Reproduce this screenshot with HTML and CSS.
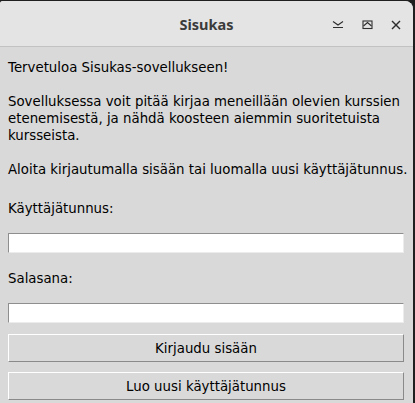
FILE: index.html
```html
<!DOCTYPE html>
<html lang="fi">
<head>
<meta charset="utf-8">
<title>Sisukas</title>
<link rel="stylesheet" href="styles.css">
</head>
<body>
<div class="window">
  <div class="titlebar">
    <span class="title">Sisukas</span>
    <div class="controls">
      <svg class="ctl ctl-min" width="12" height="10" viewBox="0 0 12 10">
        <polyline points="1,1.5 6,5 11,1.5" fill="none" stroke="#2e2e2e" stroke-width="1.1"/>
        <line x1="1" y1="7.5" x2="11" y2="7.5" stroke="#2e2e2e" stroke-width="1.1"/>
      </svg>
      <svg class="ctl ctl-max" width="11" height="10" viewBox="0 0 11 10">
        <rect x="1" y="1" width="9" height="7.5" fill="none" stroke="#2e2e2e" stroke-width="1.1"/>
        <polyline points="1.5,6 5.5,2.5 9.5,6" fill="none" stroke="#2e2e2e" stroke-width="1.1"/>
      </svg>
      <svg class="ctl ctl-close" width="10" height="10" viewBox="0 0 10 10">
        <line x1="1" y1="1" x2="9" y2="9" stroke="#2e2e2e" stroke-width="1.4"/>
        <line x1="9" y1="1" x2="1" y2="9" stroke="#2e2e2e" stroke-width="1.4"/>
      </svg>
    </div>
  </div>
  <div class="content">
    <p class="intro">Tervetuloa Sisukas-sovellukseen!<br><br>Sovelluksessa voit pitää kirjaa meneillään olevien kurssien<br>etenemisestä, ja nähdä koosteen aiemmin suoritetuista<br>kursseista.<br><br>Aloita kirjautumalla sisään tai luomalla uusi käyttäjätunnus.</p>
    <label class="field-label label-user" for="user">Käyttäjätunnus:</label>
    <input class="entry" id="user" type="text">
    <label class="field-label label-pass" for="pass">Salasana:</label>
    <input class="entry" id="pass" type="password">
    <button class="btn btn-login" type="button">Kirjaudu sisään</button>
    <button class="btn btn-create" type="button">Luo uusi käyttäjätunnus</button>
  </div>
</div>
</body>
</html>
```
FILE: styles.css
```css
html, body {
  margin: 0;
  padding: 0;
  background: #1f1f1f;
  height: 100%;
  overflow: hidden;
}

.window {
  width: 413px;
  margin-top: 1px;
  height: 420px;
  background: #d9d9d9;
  border-radius: 3px 8px 0 0;
  overflow: hidden;
  font-family: "DejaVu Sans", sans-serif;
  font-size: 13.33px;
  color: #000;
}

.titlebar {
  height: 45px;
  background: #e4e4e4;
  border-bottom: 1px solid #c2c2c2;
  display: flex;
  align-items: center;
  justify-content: center;
  position: relative;
}

.title {
  font-family: "Noto Sans", sans-serif;
  font-weight: 700;
  font-size: 14.5px;
  color: #3b3b3b;
  margin-top: 1px;
}

.controls {
  position: absolute;
  right: 12px;
  top: 19px;
  display: flex;
  align-items: center;
  gap: 18px;
}

.ctl {
  display: block;
}

.content {
  padding: 12px 9px 0 8px;
  display: flex;
  flex-direction: column;
}

.intro {
  margin: 0;
  line-height: 17px;
  white-space: nowrap;
}

.field-label {
  display: block;
  line-height: 17px;
}

.label-user {
  margin-top: 22px;
}

.label-pass {
  margin-top: 17px;
}

.entry {
  margin: 16px 0 0 0;
  height: 20px;
  box-sizing: border-box;
  background: #fff;
  border: 1px solid;
  border-color: #8e8e8e #ececec #ececec #8e8e8e;
  padding: 0 2px;
  font-family: "DejaVu Sans", sans-serif;
  font-size: 13.33px;
  outline: none;
}

.btn {
  height: 28px;
  box-sizing: border-box;
  background: #d9d9d9;
  border: 1px solid;
  border-color: #ffffff #8a8a8a #8a8a8a #ffffff;
  font-family: "DejaVu Sans", sans-serif;
  font-size: 13.33px;
  color: #000;
  padding: 0;
}

.btn-login {
  margin-top: 11px;
}

.btn-create {
  margin-top: 10px;
}
```
